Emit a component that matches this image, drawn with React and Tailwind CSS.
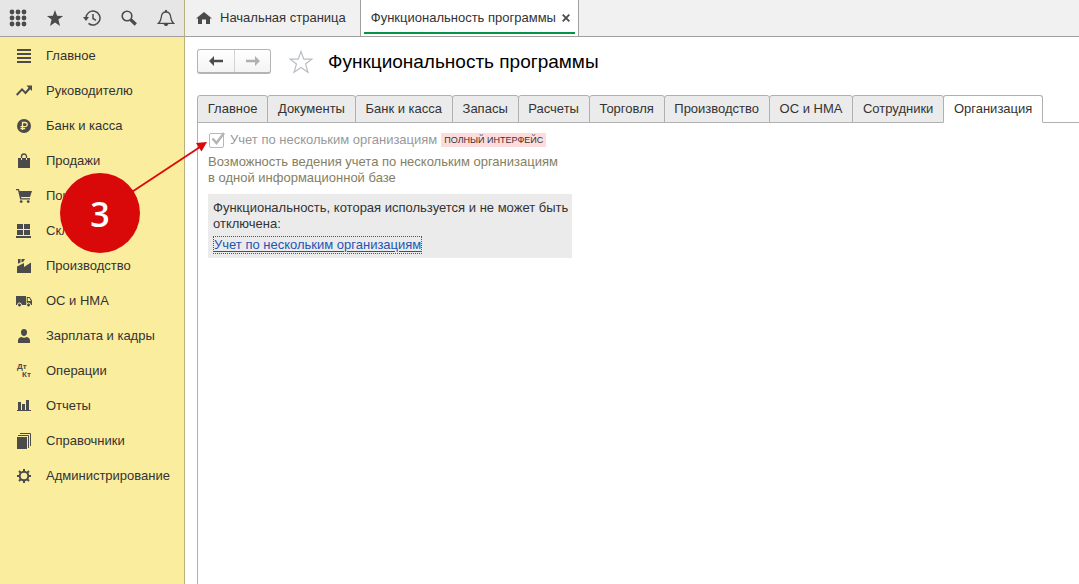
import React, { useState } from "react";

const Icon = ({ children, className = "w-4 h-4" }) => (
  <svg
    viewBox="0 0 16 16"
    className={`shrink-0 ${className}`}
    fill="#4b4b4b"
    aria-hidden="true"
  >
    {children}
  </svg>
);

const menu = [
  {
    title: "Главное",
    icon: <path d="M1 1h14v2H1zM1 5h14v2H1zM1 9h14v2H1zM1 13h14v2H1z" />,
  },
  {
    title: "Руководителю",
    icon: (
      <path d="M10.5 2.5H16V8l-1.8-1.8-4.7 5.3-3.4-3.7-4.7 5L0 11.3l6-6.4 3.5 3.7 3-3.9z" />
    ),
  },
  {
    title: "Банк и касса",
    icon: (
      <>
        <circle cx="8" cy="8" r="7" />
        <path
          d="M6.5 12V4.5h2.6a2.1 2.1 0 0 1 0 4.2H4.5M4.5 10.6h4.7"
          fill="none"
          stroke="#fbed9e"
          strokeWidth="1.3"
        />
      </>
    ),
  },
  {
    title: "Продажи",
    icon: (
      <>
        <path d="M2 5h12v10H2z" />
        <path
          d="M5.5 7V3.5a2.5 2.5 0 0 1 5 0V7"
          fill="none"
          stroke="#4b4b4b"
          strokeWidth="1.3"
        />
        <path
          d="M5.5 5v2M10.5 5v2"
          fill="none"
          stroke="#fbed9e"
          strokeWidth="1"
        />
      </>
    ),
  },
  {
    title: "Покупки",
    icon: (
      <>
        <path d="M0 1h3l.5 2H16l-2 6H5l.4 1.3H14v1.2H4.2L2 2.2H0z" />
        <circle cx="5.2" cy="13.6" r="1.4" />
        <circle cx="12.2" cy="13.6" r="1.4" />
      </>
    ),
  },
  {
    title: "Склад",
    icon: <path d="M1 1h6v5H1zM8 1h6v5H8zM1 7h6v5H1zM8 7h6v5H8zM0 13h15v2H0z" />,
  },
  {
    title: "Производство",
    icon: (
      <path d="M1 15V8.500l7-3.500v4l7-4.500V15zM2 1h2.500v3.500L2 5.800zM5.500 1H9L7.500 3.500l-2 1z" />
    ),
  },
  {
    title: "ОС и НМА",
    icon: (
      <>
        <path
          fillRule="evenodd"
          d="M0 3h10v9H0zM10.7 4h3L16 7.5V12h-5.3zM11.7 5v3h3.2L13.3 5z"
        />
        <circle cx="3.5" cy="12" r="2" stroke="#fbed9e" />
        <circle cx="12.5" cy="12" r="2" stroke="#fbed9e" />
      </>
    ),
  },
  {
    title: "Зарплата и кадры",
    icon: (
      <path d="M8 1a3 3 0 0 1 3 3.4C11 6.5 9.700 8 8 8S5 6.500 5 4.400A3 3 0 0 1 8 1zM2 15v-2.500C2 10.500 4 9 5.500 9c1.500 1 3.500 1 5 0 1.500 0 3.500 1.500 3.500 3.500V15z" />
    ),
  },
  {
    title: "Операции",
    icon: (
      <g fontFamily="Liberation Sans, sans-serif" fontWeight="700" fontSize="8">
        <text x="1" y="6">
          Дт
        </text>
        <text x="6" y="14">
          Кт
        </text>
      </g>
    ),
  },
  {
    title: "Отчеты",
    icon: <path d="M2 4h3v9H2zM6 6h3v7H6zM10 2h3v11h-3zM1 12h14v1H1z" />,
  },
  {
    title: "Справочники",
    icon: (
      <>
        <path d="M1 4h10v12H1z" />
        <path d="M2 2.500h10.500V15M4 .5h10.500V13" fill="none" stroke="#4b4b4b" />
      </>
    ),
  },
  {
    title: "Администрирование",
    icon: (
      <>
        <circle
          cx="8"
          cy="8"
          r="4.300"
          fill="none"
          stroke="#4b4b4b"
          strokeWidth="2"
        />
        <path
          d="M8 1v3M8 12v3M1 8h3M12 8h3M3 3l2.200 2.200M10.800 10.800L13 13M3 13l2.200-2.200M10.800 5.200L13 3"
          stroke="#4b4b4b"
          strokeWidth="2"
        />
      </>
    ),
  },
];

const sections = [
  "Главное",
  "Документы",
  "Банк и касса",
  "Запасы",
  "Расчеты",
  "Торговля",
  "Производство",
  "ОС и НМА",
  "Сотрудники",
  "Организация",
];

const tools = [
  {
    label: "Меню функций",
    icon: (
      <>
        {[3, 9, 15].map((y) =>
          [3, 9, 15].map((x) => (
            <circle key={`${x}-${y}`} cx={x} cy={y} r="2.400" />
          ))
        )}
      </>
    ),
  },
  {
    label: "Избранное",
    icon: <path d="M9 1l2.100 5.700 6 .2-4.700 3.700L14 17l-5-3.600L4 17l1.600-6.400L.9 6.900l6-.2z" />,
  },
  {
    label: "История",
    icon: (
      <>
        <path
          d="M3 9a7 7 0 1 1 2.500 5.400M10 5v4.500l3 1.800"
          fill="none"
          stroke="#4b4b4b"
          strokeWidth="1.500"
        />
        <path d="M0 8h6l-3 4z" />
      </>
    ),
  },
  {
    label: "Поиск",
    icon: (
      <>
        <circle
          cx="7"
          cy="7"
          r="4.800"
          fill="none"
          stroke="#4b4b4b"
          strokeWidth="1.600"
        />
        <path d="M10.500 10.500l5.300 5" stroke="#4b4b4b" strokeWidth="3.200" />
      </>
    ),
  },
  {
    label: "Оповещения",
    icon: (
      <>
        <path
          d="M1.500 14.300C4 12 4 11 4.300 8 4.600 4.500 6 3 9 3s4.400 1.500 4.700 5c.3 3 .3 4 2.800 6.300z"
          fill="none"
          stroke="#4b4b4b"
          strokeWidth="1.300"
        />
        <path d="M8 1h2v2H8zM6.500 15h5l-1.500 2H8z" />
      </>
    ),
  },
];

const Sidebar = () => (
  <aside className="w-[185px] shrink-0 flex flex-col border-r border-[#b9b07c] bg-[#fbed9e]">
    <div className="h-[37px] flex items-center justify-between px-[9px] border-b border-[#a0a0a0] bg-[#e6e6e6]">
      {tools.map((tool) => (
        <button key={tool.label} type="button" aria-label={tool.label}>
          <svg viewBox="0 0 18 18" className="w-[18px] h-[18px]" fill="#4b4b4b">
            {tool.icon}
          </svg>
        </button>
      ))}
    </div>
    <nav className="flex flex-col pt-px">
      {menu.map((item) => (
        <a
          key={item.title}
          href="#"
          className="h-[35px] flex items-center gap-[14px] pl-4"
        >
          <Icon>{item.icon}</Icon>
          <span>{item.title}</span>
        </a>
      ))}
    </nav>
  </aside>
);

const WindowTabs = () => (
  <div className="h-[37px] flex border-b border-[#a0a0a0] bg-[#f1f1f1]">
    <button
      type="button"
      className="flex items-center gap-2 pl-[11px] pr-[14px] border-r border-[#a0a0a0]"
    >
      <Icon>
        <path d="M8 2l8 6.500h-2V14h-4V9.500H6V14H2V8.500H0z" />
      </Icon>
      Начальная страница
    </button>
    <div className="relative flex items-center gap-[6px] pl-[10px] pr-2 border-r border-[#a0a0a0] bg-white">
      <span>Функциональность программы</span>
      <button type="button" aria-label="Закрыть">
        <svg
          viewBox="0 0 8 8"
          className="w-2 h-2"
          stroke="#4b4b4b"
          strokeWidth="1.800"
        >
          <path d="M.7.700l6.600 6.600M7.300.700L.7 7.300" />
        </svg>
      </button>
      <div className="absolute left-[3px] right-[3px] bottom-[2px] h-[2px] bg-[#009646]" />
    </div>
  </div>
);

const Toolbar = () => (
  <div className="flex items-center pt-3 pl-3">
    <div className="flex h-[25px] rounded-[3px] border border-[#b4b4b4] border-b-2 bg-linear-to-b from-white to-[#f4f4f4]">
      <button
        type="button"
        aria-label="Назад"
        className="w-9 flex items-center justify-center"
      >
        <Icon>
          <path d="M1 8l5-5v3.800h9v2.400H6V13z" />
        </Icon>
      </button>
      <button
        type="button"
        aria-label="Вперед"
        className="w-9 flex items-center justify-center border-l border-[#d2d2d2]"
      >
        <svg viewBox="0 0 16 16" className="w-4 h-4" fill="#b0b0b0">
          <path d="M15 8l-5-5v3.800H1v2.400h9V13z" />
        </svg>
      </button>
    </div>
    <button type="button" aria-label="В избранное" className="ml-[18px]">
      <svg
        viewBox="0 0 24 24"
        className="w-6 h-6"
        fill="none"
        stroke="#b9bec6"
        strokeWidth="1.200"
      >
        <path d="M12 1.500l2.800 7.700h8L16.500 14l2.500 8.300L12 17.500l-7 4.800L7.500 14 1.200 9.200h8z" />
      </svg>
    </button>
    <h1 className="ml-[15px] pt-px text-[19px] leading-6 text-black">
      Функциональность программы
    </h1>
  </div>
);

const SectionTabs = ({ active, onSelect }) => (
  <div className="ml-3 mt-[21px] border-b border-[#b0b0b0]">
    <div role="tablist" className="flex max-w-[845px]">
      {sections.map((name) => (
        <button
          key={name}
          type="button"
          role="tab"
          aria-selected={active === name}
          onClick={() => onSelect(name)}
          className={`flex-auto h-7 -mb-px -mr-px px-2 whitespace-nowrap rounded-t-[3px] border border-[#b0b0b0] ${
            active === name ? "border-b-white bg-white" : "bg-[#ebebeb]"
          }`}
        >
          {name}
        </button>
      ))}
    </div>
  </div>
);

const OrganizationPanel = () => (
  <div className="flex-1 ml-3 pl-[10px] pt-[9px] border-l border-[#b0b0b0]">
    <div className="flex items-center h-4">
      <label className="flex items-center gap-[6px] pl-px text-[#999999]">
        <span className="relative flex">
          <input
            type="checkbox"
            checked
            disabled
            readOnly
            className="appearance-none w-[15px] h-[15px] rounded-[2px] border border-[#b8b8b8] bg-white"
          />
          <svg
            viewBox="0 0 16 16"
            className="absolute left-0 -top-px w-4 h-4 pointer-events-none"
            fill="none"
            stroke="#b4b4b4"
            strokeWidth="2.500"
          >
            <path d="M3.500 6.500l4 4.500 7.500-10" />
          </svg>
        </span>
        Учет по нескольким организациям
      </label>
      <span className="ml-1 h-[14px] px-[3px] text-[9px] leading-[14px] bg-[#ffdcdc] text-[#333333]">
        ПОЛНЫЙ ИНТЕРФЕЙС
      </span>
    </div>
    <p className="mt-[6px] leading-4 text-[#85805f]">
      Возможность ведения учета по нескольким организациям
      <br />
      в одной информационной базе
    </p>
    <div className="w-[364px] mt-2 pt-[6px] pb-1 pl-[5px] leading-4 bg-[#ebebeb]">
      <p>
        Функциональность, которая используется и не может быть отключена:
      </p>
      <a
        href="#"
        className="block w-fit mt-1 leading-4 border border-dotted border-[#555555] text-[#1f55b5] underline underline-offset-2"
      >
        Учет по нескольким организациям
      </a>
    </div>
  </div>
);

// step marker with an arrow pointing at the checkbox
const StepMarker = ({ number }) => (
  <div className="absolute left-[60px] top-[140px] pointer-events-none">
    <svg width="150" height="114" viewBox="0 0 150 114">
      <path d="M40 73L140 7" stroke="#d90909" strokeWidth="1.800" />
      <path d="M147 2l-5.500 9.500-5.500-8.500z" fill="#d90909" />
    </svg>
    <div className="absolute left-0 top-[33px] w-20 h-20 pt-[2px] rounded-full flex items-center justify-center bg-[#d90909] text-white text-[34px] leading-10 font-semibold font-['Open_Sans',sans-serif]">
      {number}
    </div>
  </div>
);

const App = () => {
  const [active, setActive] = useState("Организация");

  return (
    <div className="relative flex min-h-screen bg-white text-[13px] text-[#333333] font-['Liberation_Sans',Arial,sans-serif]">
      <Sidebar />
      <main className="flex-1 min-w-0 flex flex-col">
        <WindowTabs />
        <Toolbar />
        <SectionTabs active={active} onSelect={setActive} />
        <OrganizationPanel />
      </main>
      <StepMarker number={3} />
    </div>
  );
};

export default App;
